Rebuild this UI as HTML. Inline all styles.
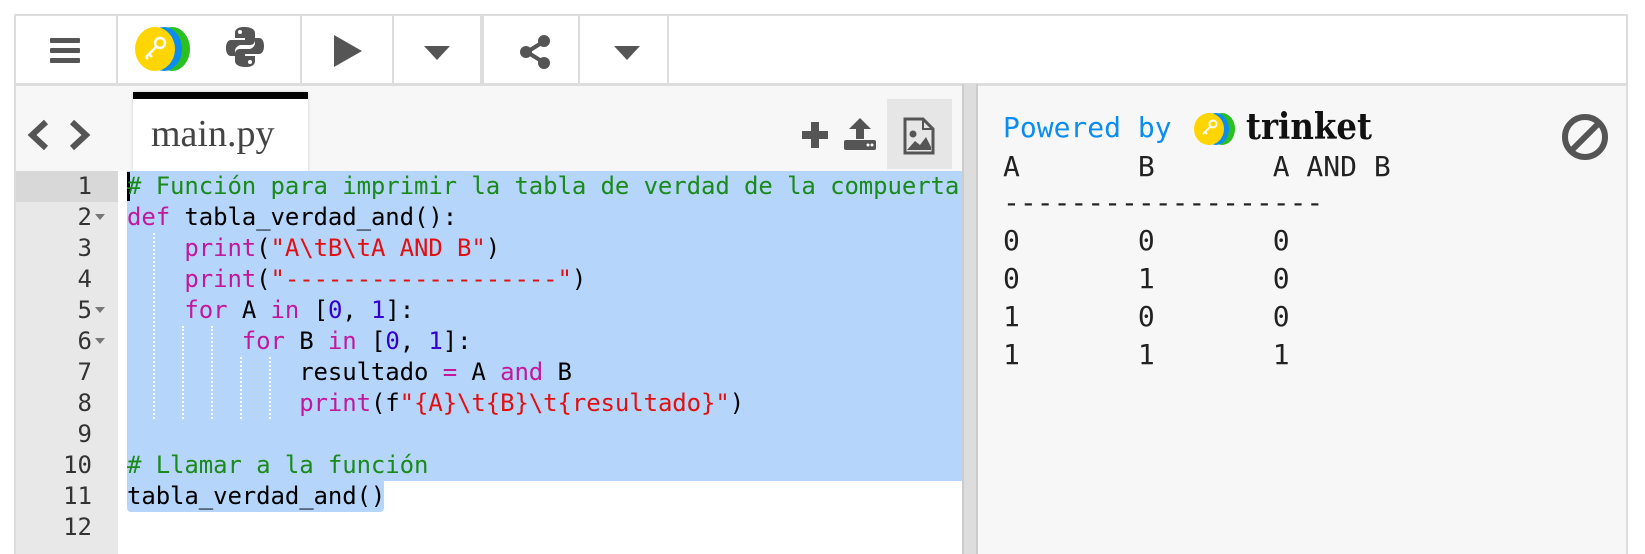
<!DOCTYPE html>
<html><head><meta charset="utf-8"><style>
*{margin:0;padding:0;box-sizing:border-box}
body{width:1645px;height:554px;background:#fff;position:relative;overflow:hidden;font-family:"Liberation Sans",sans-serif}
.abs{position:absolute}
#tb{left:14px;top:14px;width:1614px;height:71px;border:2px solid #ddd;background:#fff}
.sep{position:absolute;top:0;width:2px;height:67px;background:#ddd}
#editor{left:14px;top:84px;width:948px;height:470px;background:#f7f7f7;border-left:2px solid #ddd;border-top:2px solid #ddd}
#gut{left:14px;top:171px;width:104px;height:383px;background:#e8e8e8;border-left:2px solid #ddd}
#code{left:118px;top:171px;width:844px;height:383px;background:#fff}
.ln{position:absolute;left:14px;width:104px;height:31px;font:24px/31px "DejaVu Sans Mono",monospace;color:#333;text-align:right;padding-right:26px}
.cl{position:absolute;left:127px;height:31px;font:24px/31px "DejaVu Sans Mono",monospace;color:#000;white-space:pre;letter-spacing:-0.1px}
.c{color:#1a8a1a}.k{color:#c2189e}.s{color:#e01010}.n{color:#3300cc}
#out{left:978px;top:84px;width:650px;height:470px;background:#f7f7f7;border-top:2px solid #ddd;border-right:2px solid #ddd}
.ol{position:absolute;left:1003px;font:28px/38px "DejaVu Sans Mono",monospace;color:#222;white-space:pre}
.fold{position:absolute;left:95px;width:0;height:0;border-left:5px solid transparent;border-right:5px solid transparent;border-top:6px solid #777}
.guide{position:absolute;width:0;border-left:2px dotted #fff}
</style></head><body>
<div id="tb" class="abs">
 <div class="sep" style="left:100px"></div>
 <div class="sep" style="left:284px"></div>
 <div class="sep" style="left:376px"></div>
 <div class="sep" style="left:464px;width:4px;background:#ddd"></div>
 <div class="sep" style="left:562px"></div>
 <div class="sep" style="left:651px"></div>
 <div class="abs" style="left:34px;top:22px;width:30px;height:5px;background:#555;border-radius:1px"></div>
 <div class="abs" style="left:34px;top:32px;width:30px;height:5px;background:#555;border-radius:1px"></div>
 <div class="abs" style="left:34px;top:42px;width:30px;height:5px;background:#555;border-radius:1px"></div>
 <svg class="abs" style="left:110px;top:10px" width="70" height="46" viewBox="0 0 70 46"><ellipse cx="46" cy="23" rx="18" ry="22" fill="#2bbf1f"/><ellipse cx="38" cy="23" rx="18" ry="22" fill="#0a8cf0"/><ellipse cx="29" cy="23" rx="20" ry="22" fill="#ffd500"/><circle cx="34" cy="17" r="5" fill="none" stroke="#fff" stroke-width="2.5"/><path d="M31 20 L20 31 M23 28 l3 3 M20 31 l2 2" stroke="#fff" stroke-width="2.5" fill="none"/></svg>
 <svg class="abs" style="left:210px;top:10px" width="38" height="42" viewBox="0 0 38 42"><path d="M18 1c-7 0-9 3-9 6v5h10v2H5c-3 0-5 3-5 8s2 8 5 8h4v-5c0-3 3-6 6-6h9c3 0 5-2 5-5V7c0-3-3-6-11-6z" fill="#555"/><path d="M20 41c7 0 9-3 9-6v-5H19v-2h14c3 0 5-3 5-8s-2-8-5-8h-4v5c0 3-3 6-6 6h-9c-3 0-5 2-5 5v7c0 3 3 6 11 6z" fill="#555"/><circle cx="14" cy="6" r="2" fill="#fff"/><circle cx="24" cy="36" r="2" fill="#fff"/></svg>
 <svg class="abs" style="left:318px;top:19px" width="28" height="32"><path d="M0 0L28 16L0 32Z" fill="#555"/></svg>
 <svg class="abs" style="left:408px;top:30px" width="26" height="14"><path d="M0 0H26L13 14Z" fill="#555"/></svg>
 <svg class="abs" style="left:503px;top:19px" width="32" height="34" viewBox="0 0 32 34"><path d="M8 17L24 7M8 17L24 27" stroke="#555" stroke-width="4"/><circle cx="7" cy="17" r="6" fill="#555"/><circle cx="25" cy="6" r="6" fill="#555"/><circle cx="25" cy="28" r="6" fill="#555"/></svg>
 <svg class="abs" style="left:598px;top:30px" width="26" height="14"><path d="M0 0H26L13 14Z" fill="#555"/></svg>
</div>

<div id="editor" class="abs"></div>
<svg class="abs" style="left:26px;top:118px" width="66" height="34"><path d="M20 4L6 17L20 30M46 4L60 17L46 30" stroke="#555" stroke-width="6" fill="none"/></svg>
<div class="abs" style="left:133px;top:92px;width:175px;height:80px;background:#fff;border-top:7px solid #000;box-shadow:0 0 3px #ccc"></div>
<div class="abs" style="left:151px;top:112px;font:38px 'Liberation Serif',serif;color:#444">main.py</div>
<svg class="abs" style="left:800px;top:120px" width="30" height="30"><path d="M11 2h8v9h9v8h-9v9h-8v-9H2v-8h9z" fill="#555"/></svg>
<svg class="abs" style="left:843px;top:117px" width="34" height="34"><path d="M17 1L28 12H21V22H13V12H6Z" fill="#555"/><rect x="1" y="23" width="32" height="10" rx="2" fill="#555"/><circle cx="25" cy="28" r="1.5" fill="#fff"/><circle cx="29" cy="28" r="1.5" fill="#fff"/></svg>
<div class="abs" style="left:887px;top:99px;width:65px;height:70px;background:#e6e6e6"></div>
<svg class="abs" style="left:903px;top:117px" width="32" height="38"><path d="M2 2H20L30 12V36H2Z" fill="none" stroke="#555" stroke-width="3"/><path d="M20 2V12H30" fill="none" stroke="#555" stroke-width="2"/><circle cx="10" cy="17" r="3.5" fill="#555"/><path d="M4 33L12 24L17 28L23 20L28 30V33Z" fill="#555"/></svg>

<div id="gut" class="abs"></div>
<div class="abs" style="left:16px;top:171px;width:102px;height:31px;background:#d8d8d8"></div>
<div id="code" class="abs"></div>
<div class="abs" style="left:127px;top:171px;width:835px;height:310px;background:#b5d5fb"></div>
<div class="abs" style="left:127px;top:481px;width:257px;height:31px;background:#b5d5fb;border-radius:0 0 4px 4px"></div>
<div class="abs" style="left:127px;top:172px;width:3px;height:29px;background:#000"></div>
<div class="abs" style="left:962px;top:84px;width:16px;height:470px;background:#ddd;border-left:2px solid #ccc;border-right:2px solid #ccc"></div>

<div class="guide" style="left:153px;top:233px;height:186px"></div>
<div class="guide" style="left:182px;top:326px;height:93px"></div>
<div class="guide" style="left:211px;top:326px;height:93px"></div>
<div class="guide" style="left:240px;top:357px;height:62px"></div>
<div class="guide" style="left:269px;top:357px;height:62px"></div>

<div class="ln" style="top:171px">1</div>
<div class="ln" style="top:202px">2</div><div class="fold" style="top:214px"></div>
<div class="ln" style="top:233px">3</div>
<div class="ln" style="top:264px">4</div>
<div class="ln" style="top:295px">5</div><div class="fold" style="top:307px"></div>
<div class="ln" style="top:326px">6</div><div class="fold" style="top:338px"></div>
<div class="ln" style="top:357px">7</div>
<div class="ln" style="top:388px">8</div>
<div class="ln" style="top:419px">9</div>
<div class="ln" style="top:450px">10</div>
<div class="ln" style="top:481px">11</div>
<div class="ln" style="top:512px">12</div>

<div class="cl" style="top:171px"><span class="c"># Función para imprimir la tabla de verdad de la compuerta</span></div>
<div class="cl" style="top:202px"><span class="k">def</span> tabla_verdad_and():</div>
<div class="cl" style="top:233px">    <span class="k">print</span>(<span class="s">"A\tB\tA AND B"</span>)</div>
<div class="cl" style="top:264px">    <span class="k">print</span>(<span class="s">"-------------------"</span>)</div>
<div class="cl" style="top:295px">    <span class="k">for</span> A <span class="k">in</span> [<span class="n">0</span>, <span class="n">1</span>]:</div>
<div class="cl" style="top:326px">        <span class="k">for</span> B <span class="k">in</span> [<span class="n">0</span>, <span class="n">1</span>]:</div>
<div class="cl" style="top:357px">            resultado <span class="k">=</span> A <span class="k">and</span> B</div>
<div class="cl" style="top:388px">            <span class="k">print</span>(f<span class="s">"{A}\t{B}\t{resultado}"</span>)</div>
<div class="cl" style="top:450px"><span class="c"># Llamar a la función</span></div>
<div class="cl" style="top:481px">tabla_verdad_and()</div>

<div id="out" class="abs"></div>
<div class="ol" style="top:109px;color:#0a8cf0">Powered by</div>
<svg class="abs" style="left:1192px;top:112px" width="46" height="34" viewBox="0 0 46 34"><ellipse cx="30" cy="17" rx="13" ry="16" fill="#2bbf1f"/><ellipse cx="24" cy="17" rx="13" ry="16" fill="#0a8cf0"/><ellipse cx="17" cy="17" rx="15" ry="16" fill="#ffd500"/><circle cx="21" cy="12" r="3.5" fill="none" stroke="#fff" stroke-width="2"/><path d="M19 14L11 22M13 20l2 2" stroke="#fff" stroke-width="2"/></svg>
<div class="abs" style="left:1246px;top:106px;font:bold 36px 'DejaVu Serif','Liberation Serif',serif;color:#111;transform:scaleX(.9);transform-origin:left">trinket</div>
<svg class="abs" style="left:1561px;top:113px" width="48" height="48"><circle cx="24" cy="24" r="20" fill="none" stroke="#555" stroke-width="6"/><path d="M10 38L38 10" stroke="#555" stroke-width="6"/></svg>
<div class="ol" style="top:148px">A       B       A AND B</div>
<div class="ol" style="top:184px">-------------------</div>
<div class="ol" style="top:222px">0       0       0</div>
<div class="ol" style="top:260px">0       1       0</div>
<div class="ol" style="top:298px">1       0       0</div>
<div class="ol" style="top:336px">1       1       1</div>
</body></html>
